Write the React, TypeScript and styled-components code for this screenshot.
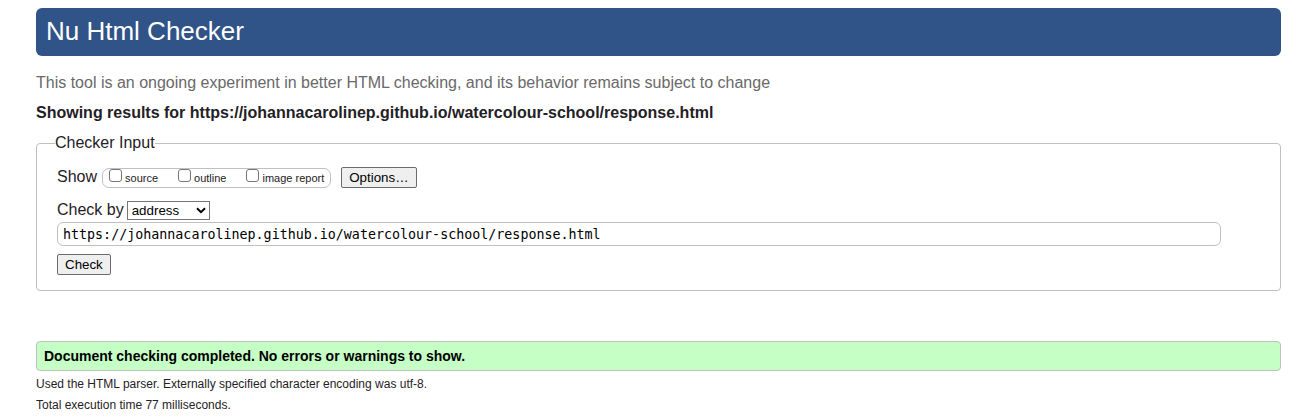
import React, { useState } from "react";
import styled, { createGlobalStyle } from "styled-components";

const GlobalStyle = createGlobalStyle`
  *, *::before, *::after { box-sizing: border-box; }
  body {
    margin: 0;
    background: #fff;
    color: #1f2126;
    font: 16px/20px "Liberation Sans", Arial, sans-serif;
  }
`;

const Page = styled.main`
  padding: 8px 35px 4px 36px;
`;

const Banner = styled.h1`
  margin: 0;
  padding: 8px 10px 10px;
  border-radius: 6px;
  background: #305388;
  color: #fff;
  font-size: 26px;
  font-weight: 400;
  line-height: 30px;
`;

const Tagline = styled.p`
  margin: 17px 0 10px;
  color: #696969;
`;

const ResultsHeading = styled.h2`
  margin: 0 0 10px;
  font-size: 16px;
  font-weight: 700;
  line-height: 20px;
`;

const InputGroup = styled.fieldset`
  min-width: 0;
  margin: 0;
  padding: 14px 18px 15px;
  border: 1px solid #c0c0c0;
  border-radius: 4px;
`;

const Legend = styled.legend`
  padding: 0;
`;

const Row = styled.div`
  display: flex;
  align-items: center;
  padding: 0 2px;
`;

const ShowRow = styled(Row)`
  margin-bottom: 12px;
`;

const RowLabel = styled.span`
  margin-right: 5px;
  padding-bottom: 2px;
  line-height: 18px;
`;

const SelectLabel = styled.label`
  margin-right: 3px;
`;

const Toggles = styled.div`
  display: flex;
  align-items: center;
  gap: 20px;
  height: 20px;
  margin-right: 10px;
  padding: 0 6px;
  border: 1px solid #c0c0c0;
  border-radius: 7px;
`;

const Toggle = styled.label`
  display: flex;
  align-items: flex-start;
  gap: 3px;
  height: 18px;
  font-size: 11px;
  line-height: 18px;
`;

const Checkbox = styled.input`
  appearance: none;
  width: 13px;
  height: 13px;
  margin: 0;
  border: 1px solid #767676;
  border-radius: 3px;
  background: #fff;

  &:checked {
    border-color: #305388;
    background: #305388;
  }
`;

const Button = styled.button`
  height: 21px;
  padding: 0 7px;
  border: 1px solid #6b6b6b;
  border-radius: 2px;
  background: #efefef;
  color: #000;
  font-family: inherit;
`;

const SelectWrap = styled.span`
  display: grid;
  align-items: center;

  & > * {
    grid-area: 1 / 1;
  }
`;

const Select = styled.select`
  appearance: none;
  width: 83px;
  height: 19px;
  padding: 0 4px;
  border: 1px solid #767676;
  border-radius: 0;
  background: #fff;
  color: #000;
  font-family: inherit;
`;

const Chevron = styled.svg`
  justify-self: end;
  margin-right: 4px;
  pointer-events: none;
`;

const UrlField = styled.input`
  width: calc(100% - 41px);
  height: 24px;
  padding: 0 5px;
  border: 1px solid #c0c0c0;
  border-radius: 6px;
  background: #fff;
  color: #000;
  font-family: "DejaVu Sans Mono", monospace;
`;

const AddressRow = styled(Row)`
  padding-right: 0;
  margin: 2px 0 8px;
`;

const Success = styled.p`
  margin: 50px 0 3px;
  padding: 4px 7px;
  border: 1px solid #c0c0c0;
  border-radius: 4px;
  background: #c6ffc6;
  color: #000;
  font-size: 14px;
  font-weight: 700;
`;

const Detail = styled.p`
  margin: 0 0 1px;
  font-size: 12px;
`;

const views = ["source", "outline", "image report"];

export default function App() {
  const [url, setUrl] = useState(
    "https://johannacarolinep.github.io/watercolour-school/response.html"
  );

  return (
    <>
      <GlobalStyle />
      <Page>
        <Banner>Nu Html Checker</Banner>
        <Tagline>
          This tool is an ongoing experiment in better HTML checking, and its
          behavior remains subject to change
        </Tagline>
        <ResultsHeading>
          Showing results for
          https://johannacarolinep.github.io/watercolour-school/response.html
        </ResultsHeading>
        <form onSubmit={(event) => event.preventDefault()}>
          <InputGroup>
            <Legend>Checker Input</Legend>
            <ShowRow>
              <RowLabel id="show-label">Show</RowLabel>
              <Toggles role="group" aria-labelledby="show-label">
                {views.map((view) => (
                  <Toggle key={view}>
                    <Checkbox type="checkbox" name={view} />
                    {view}
                  </Toggle>
                ))}
              </Toggles>
              <Button type="button">Options…</Button>
            </ShowRow>
            <Row>
              <SelectLabel htmlFor="method">Check by</SelectLabel>
              <SelectWrap>
                <Select id="method" defaultValue="address">
                  <option value="address">address</option>
                  <option value="upload">file upload</option>
                  <option value="text">text input</option>
                </Select>
                <Chevron width="10" height="7" viewBox="0 0 10 7" aria-hidden="true">
                  <path d="M1 1.2 5 5.2 9 1.2" fill="none" stroke="#000" strokeWidth="2" />
                </Chevron>
              </SelectWrap>
            </Row>
            <AddressRow>
              <UrlField
                type="url"
                aria-label="Address"
                value={url}
                onChange={(event) => setUrl(event.target.value)}
              />
            </AddressRow>
            <Row>
              <Button type="submit">Check</Button>
            </Row>
          </InputGroup>
        </form>
        <Success role="status">
          Document checking completed. No errors or warnings to show.
        </Success>
        <Detail>
          Used the HTML parser. Externally specified character encoding was
          utf-8.
        </Detail>
        <Detail>Total execution time 77 milliseconds.</Detail>
      </Page>
    </>
  );
}
